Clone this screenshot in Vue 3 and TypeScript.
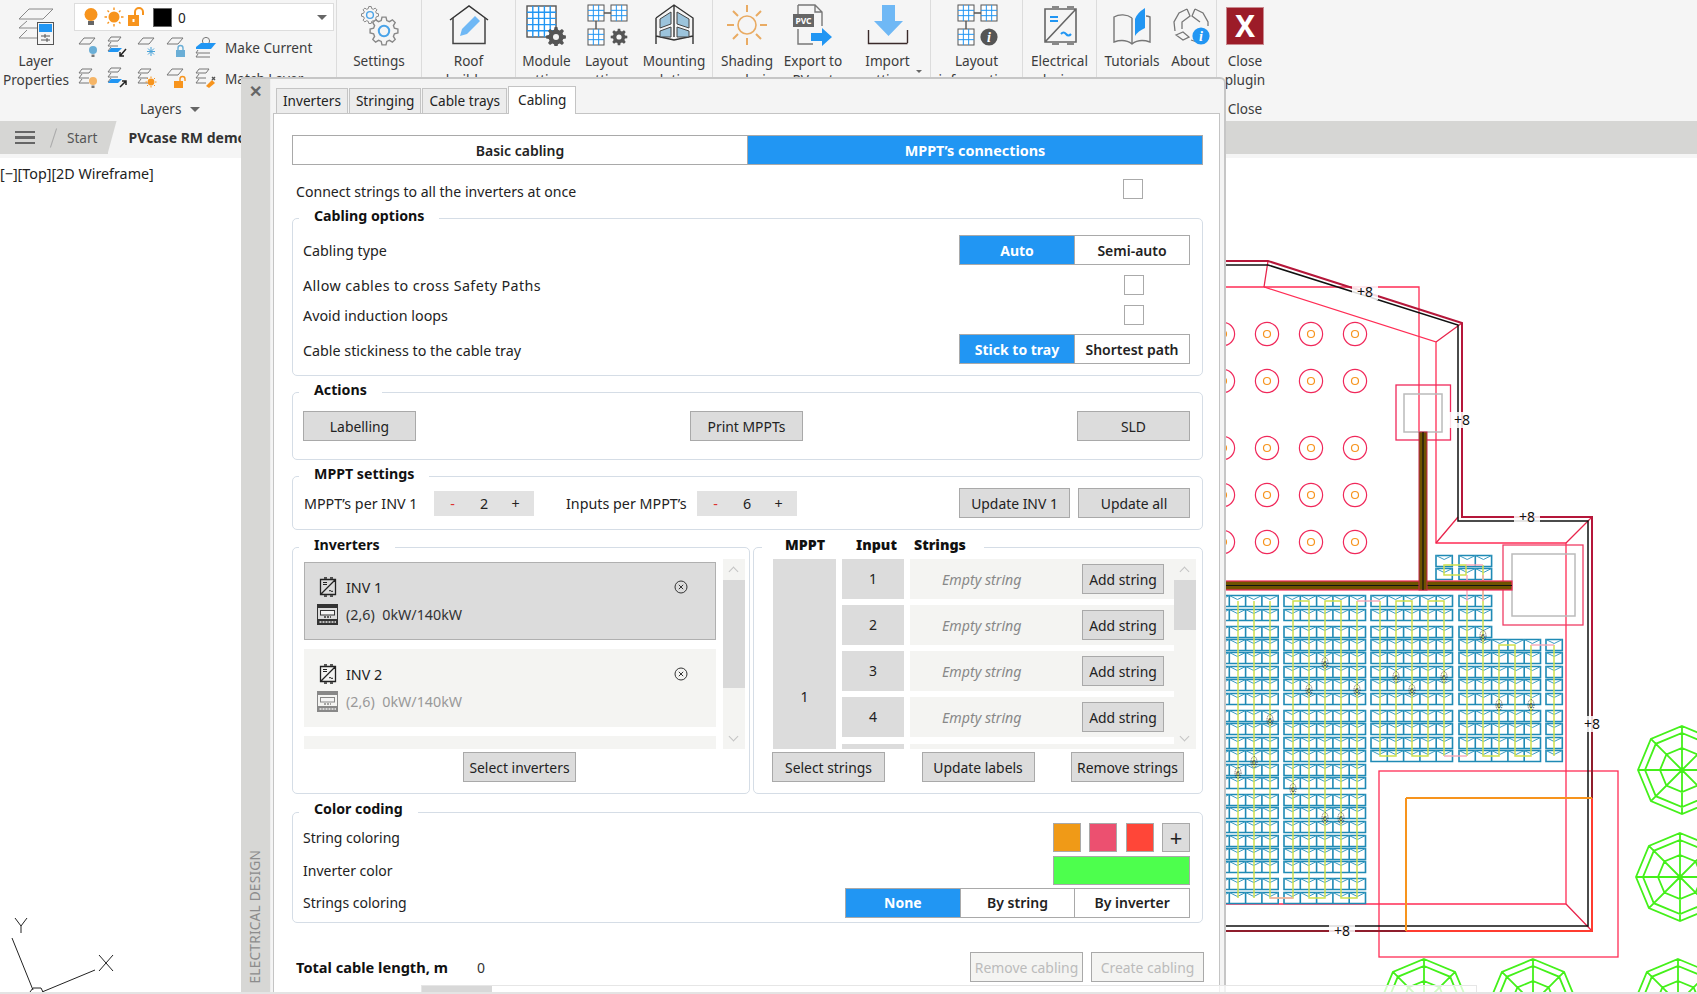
<script setup lang="ts">
// Static mock of the PVcase cabling dialog floating over the CAD window

const TAU = Math.PI * 2

function gear(cx: number, cy: number, ro: number, ri: number, n: number): string {
  let d = ''
  const step = TAU / n
  for (let i = 0; i < n; i++) {
    const a = i * step
    const pts: [number, number][] = [
      [ri, a - step * 0.34],
      [ro, a - step * 0.18],
      [ro, a + step * 0.18],
      [ri, a + step * 0.34]
    ]
    pts.forEach(([r, t], j) => {
      d += `${i === 0 && j === 0 ? 'M' : 'L'}${(cx + r * Math.sin(t)).toFixed(1)} ${(cy - r * Math.cos(t)).toFixed(1)}`
    })
  }
  return d + 'Z'
}

function grid(x: number, y: number, w: number, h: number, nx: number, ny: number): string {
  let d = ''
  for (let i = 1; i < nx; i++) d += `M${x + (w * i) / nx} ${y}V${y + h}`
  for (let i = 1; i < ny; i++) d += `M${x} ${y + (h * i) / ny}H${x + w}`
  return d
}

// ---- drawing data, in page pixels ----
const rowsY = [601, 615, 632, 645, 658, 672, 685, 699, 716, 729, 743, 756, 770, 783, 800, 813, 827, 841, 854, 867, 884, 898]
const CELL = 16.3

function moduleBlock(x0: number, cells: number, ys: number[]): string {
  let d = ''
  for (const cy of ys) {
    const top = cy - 5.5
    for (let c = 0; c < cells; c++) {
      const x = x0 + c * CELL
      d += `M${x} ${top}h${CELL}v11h${-CELL}z`
    }
  }
  return d
}

function moduleMarks(x0: number, cells: number, ys: number[]): string {
  let d = ''
  for (const cy of ys) {
    for (let c = 0; c < cells; c++) {
      d += `M${x0 + c * CELL} ${cy - 5.5}l${CELL / 2} 4l${CELL / 2} -4`
    }
  }
  return d
}

const blocks: [number, number, number[]][] = [
  [1213, 4, rowsY],
  [1284, 5, rowsY],
  [1371, 5, rowsY.slice(0, 12)],
  [1459, 2, rowsY.slice(0, 3)],
  [1459, 5, rowsY.slice(3, 12)],
  [1546, 1, rowsY.slice(3, 12)],
  [1436, 1, [561, 574]],
  [1459, 2, [561, 574]]
]
const modules = blocks.map(b => moduleBlock(b[0], b[1], b[2])).join('')
const moduleVs = blocks.map(b => moduleMarks(b[0], b[1], b[2])).join('')

const stringLines = [
  'M1238 601V898M1254 601V898M1270 601V898H1293V601H1309V898H1325V601H1341V898H1357V601',
  'M1380 601V756H1396V601H1412V756H1428V601H1444V756',
  'M1467 601V756M1483 601V756H1499V645H1515V756H1531V645',
  'M1554 645V756',
  'M1444 565H1466V575H1444ZM1483 565V601'
]
const pinkLinks = ['M1270 898H1293', 'M1357 601H1380', 'M1444 756H1467', 'M1531 645H1554', 'M1466 565H1483', 'M1467 575V601M1483 575V601']

const tinyLabels: [number, number][] = [
  [1270, 720], [1254, 762], [1238, 773], [1293, 789], [1309, 690], [1325, 663], [1357, 690], [1325, 818], [1341, 818],
  [1396, 677], [1412, 690], [1444, 677], [1483, 636], [1499, 705], [1531, 705]
]

const circleCols = [1223, 1267, 1311, 1355]
const circleRows = [334, 381, 448, 495, 542]

const plusLabels: [number, number][] = [[1365, 292], [1462, 420], [1527, 517], [1592, 724], [1342, 931]]

function tree(cx: number, cy: number): string {
  let d = ''
  for (const r of [44, 37, 22]) {
    for (let i = 0; i < 8; i++) {
      const t = (i * TAU) / 8
      d += `${i ? 'L' : 'M'}${(cx + r * Math.sin(t)).toFixed(1)} ${(cy - r * Math.cos(t)).toFixed(1)}`
    }
    d += 'Z'
  }
  for (let i = 0; i < 8; i++) {
    const t = (i * TAU) / 8
    d += `M${cx} ${cy}L${(cx + 44 * Math.sin(t)).toFixed(1)} ${(cy - 44 * Math.cos(t)).toFixed(1)}`
  }
  return d
}
const trees = [tree(1682, 770), tree(1680, 877), tree(1424, 1003), tree(1533, 1003), tree(1678, 1003)].join('')

// ---- dialog data ----
const tabs = ['Inverters', 'Stringing', 'Cable trays', 'Cabling']
const inverters = [
  { name: 'INV 1', selected: true },
  { name: 'INV 2', selected: false }
]
const inputs = [1, 2, 3, 4]
const swatches = ['#f09a17', '#ec5070', '#ff4638']
</script>

<template>
  <div class="app">
    <svg class="sprite" width="0" height="0">
      <symbol id="sheet" viewBox="0 0 20 22">
        <path d="M1 13 L6 7 H17 L12 13 Z" fill="none" stroke="#777" stroke-width="1" />
      </symbol>
      <symbol id="stack" viewBox="0 0 20 22">
        <path d="M1 6 L4 2 H14 L11 6 Z M4 7 L1 11 H11 M4 12 L1 16 H11" fill="none" stroke="#777" stroke-width="1" />
      </symbol>
      <symbol id="inv" viewBox="0 0 18 20">
        <path d="M1.5 2.5H16.5V17.5H1.5Z M1.5 17.5 L16.5 2.5 M5 0.8H8 M11 0.8H14 M5 19.2H8 M11 19.2H14" fill="none" stroke="#222" stroke-width="1.3" />
        <path d="M4 5.5H8 M4 7.5H8 M10 14 q1 -1.2 2 0 t2 0" fill="none" stroke="#222" stroke-width="1" />
      </symbol>
      <symbol id="device" viewBox="0 0 21 21">
        <rect x="0.5" y="0.5" width="20" height="20" fill="none" stroke="currentColor" />
        <path d="M1 2.5H20" fill="none" stroke="currentColor" stroke-width="3" />
        <path d="M1 15.5H20" fill="none" stroke="currentColor" />
        <path d="M1 18H20" fill="none" stroke="currentColor" stroke-width="4" />
        <path d="M2.5 18H19" fill="none" stroke="#eee" stroke-width="1.4" stroke-dasharray="2 1" />
        <rect x="3.5" y="6.5" width="14" height="4.5" fill="#f4f4f4" stroke="currentColor" />
        <path d="M7 13H14" stroke="currentColor" stroke-width="1.4" stroke-dasharray="2 1" />
      </symbol>
    </svg>

    <!-- ribbon -->
    <header class="ribbon">
      <section class="panel layers">
        <div class="layers-top">
          <div class="tool layer-props">
            <svg width="44" height="42" viewBox="0 0 44 42">
              <path d="M6 15 L16 5 H40 L30 15 Z" fill="none" stroke="#888" />
              <path d="M14 17 L6 24 H30 M14 26 L6 34 H27" fill="none" stroke="#888" />
              <rect x="24.5" y="18.5" width="16" height="22" fill="#f5f5f5" stroke="#555" />
              <rect x="26" y="20" width="13" height="8" fill="#2196f3" />
              <path d="M28 32H37 M28 36H37 M32 30v4 M34 34v4" stroke="#555" fill="none" />
            </svg>
            <span>Layer<br />Properties</span>
          </div>
          <div class="layers-side">
            <div class="combo">
              <svg width="18" height="22" viewBox="0 0 18 22">
                <circle cx="8" cy="8.5" r="6.5" fill="#f7941d" />
                <path d="M5 15H11V19H5Z" fill="#666" />
              </svg>
              <svg width="20" height="22" viewBox="0 0 20 22">
                <circle cx="10" cy="11" r="5.5" fill="#f7941d" />
                <path d="M10 1.5V4 M10 18V20.5 M.5 11H3 M17 11H19.5 M3.5 4.5L5 6 M15 16L16.5 17.5 M3.5 17.5L5 16 M15 6L16.5 4.5" stroke="#f7941d" stroke-width="1.4" />
              </svg>
              <svg width="20" height="22" viewBox="0 0 20 22">
                <rect x="1" y="9" width="11" height="11" fill="#f7941d" />
                <rect x="5.5" y="13" width="2" height="3" fill="#fff" />
                <path d="M8 9V6a4 4 0 0 1 8 0V9" fill="none" stroke="#f7941d" stroke-width="2" />
              </svg>
              <i class="black"></i>
              <span class="zero">0</span>
              <i class="caret"></i>
            </div>
            <div class="icon-row">
              <svg width="20" height="22" viewBox="0 0 20 22">
                <use href="#sheet" width="20" height="22" y="-5" />
                <circle cx="15" cy="14" r="4" fill="#6aaed6" /><path d="M13.5 18.5h3V21h-3z" fill="#777" />
              </svg>
              <svg width="21" height="22" viewBox="0 0 21 22">
                <use href="#stack" width="20" height="22" y="-1" />
                <path d="M1 16 L4 12 H15 L11 16 Z" fill="#2196f3" />
                <path d="M19 13 L13 20 M13 16v4h4" stroke="#222" fill="none" stroke-width="1.5" />
              </svg>
              <svg width="20" height="22" viewBox="0 0 20 22">
                <use href="#sheet" width="20" height="22" y="-5" />
                <path d="M14 11V20 M10 15.5H18 M11 12.5L17 18.5 M11 18.5L17 12.5" stroke="#4aa3d8" />
              </svg>
              <svg width="20" height="22" viewBox="0 0 20 22">
                <use href="#sheet" width="20" height="22" y="-5" />
                <rect x="10" y="14" width="9" height="7" fill="#6aaed6" />
                <path d="M12 14V12a2.5 2.5 0 0 1 5 0V14" fill="none" stroke="#6aaed6" stroke-width="1.4" />
              </svg>
              <svg width="22" height="22" viewBox="0 0 22 22">
                <circle cx="11" cy="5" r="3.6" fill="#f5f5f5" stroke="#777" />
                <path d="M1 11 L6 7 H21 L16 13 H1 Z" fill="#2196f3" />
                <path d="M3 14 L1 17 H15 M3 18 L1 21 H15" fill="none" stroke="#777" />
              </svg>
              <span class="row-label">Make Current</span>
            </div>
            <div class="icon-row">
              <svg width="20" height="22" viewBox="0 0 20 22">
                <use href="#stack" width="20" height="22" />
                <circle cx="15" cy="14" r="4" fill="#f5b567" /><path d="M13.5 18.5h3V21h-3z" fill="#777" />
              </svg>
              <svg width="21" height="22" viewBox="0 0 21 22">
                <use href="#stack" width="20" height="22" y="-1" />
                <path d="M1 16 L4 12 H15 L11 16 Z" fill="#2196f3" />
                <path d="M13 20 L19 14 M15 14h4v4" stroke="#222" fill="none" stroke-width="1.5" />
              </svg>
              <svg width="20" height="22" viewBox="0 0 20 22">
                <use href="#stack" width="20" height="22" />
                <circle cx="14" cy="15" r="3.4" fill="#f7941d" />
                <path d="M14 9.5V11 M14 19V20.5 M8.5 15H10 M18 15H19.5 M10 11L11 12 M17 18L18 19 M10 19L11 18 M17 12L18 11" stroke="#f7941d" />
              </svg>
              <svg width="20" height="22" viewBox="0 0 20 22">
                <use href="#sheet" width="20" height="22" y="-5" />
                <rect x="8" y="14" width="9" height="7" fill="#f7941d" />
                <path d="M14 14V12a2.5 2.5 0 0 1 5 0V14" fill="none" stroke="#f7941d" stroke-width="1.4" />
              </svg>
              <svg width="22" height="22" viewBox="0 0 22 22">
                <use href="#stack" width="20" height="22" />
                <path d="M11 19 L17 13 L20 16 L14 21 Z" fill="#f7941d" />
                <path d="M17 10 L20 13 M20 10 L17 13" stroke="#555" stroke-width="1.4" />
              </svg>
              <span class="row-label">Match Layer</span>
            </div>
          </div>
        </div>
        <div class="panel-foot">Layers <i class="caret small"></i></div>
      </section>

      <section class="panel p-settings">
        <div class="tool">
          <svg width="40" height="40" viewBox="0 0 40 40">
            <path :d="gear(11, 10, 8.6, 6.6, 8)" fill="#f5f5f5" stroke="#888" />
            <circle cx="11" cy="10" r="3.4" fill="#f5f5f5" stroke="#4aa3e8" stroke-width="1.4" />
            <path :d="gear(25, 26, 14, 10.8, 8)" fill="#f5f5f5" stroke="#888" stroke-width="1.4" />
            <circle cx="25" cy="26" r="5.2" fill="#f5f5f5" stroke="#4aa3e8" stroke-width="2" />
          </svg>
          <span>Settings</span>
        </div>
      </section>

      <section class="panel p-roof">
        <div class="tool">
          <svg width="40" height="40" viewBox="0 0 40 40">
            <path d="M1 15 L20 1 L39 15" fill="none" stroke="#333" stroke-width="1.5" />
            <path d="M4 13V38.5H36V13" fill="none" stroke="#444" stroke-width="1.5" />
            <path d="M11 31 L13 24 L26 11 L31 16 L18 29 Z" fill="#6fb8f5" />
          </svg>
          <span>Roof<br />builder</span>
        </div>
      </section>

      <section class="panel p-module">
        <div class="tool t-module">
          <svg width="42" height="42" viewBox="0 0 42 42">
            <rect x="1" y="2" width="29" height="31" fill="#fff" stroke="#555" stroke-width="1.4" />
            <path :d="grid(1, 2, 29, 31, 5, 5)" stroke="#2196f3" stroke-width="1.4" fill="none" />
            <path :d="gear(30, 33, 10, 7.5, 8)" fill="#555" />
            <circle cx="30" cy="33" r="3" fill="#f5f5f5" />
          </svg>
          <span>Module<br />settings</span>
        </div>
        <div class="tool t-layout">
          <svg width="42" height="42" viewBox="0 0 42 42">
            <g v-for="p in [[2, 1], [25, 1], [2, 25]]" :key="p[0] * 100 + p[1]">
              <rect :x="p[0]" :y="p[1]" width="16" height="16" fill="#fff" stroke="#555" />
              <path :d="grid(p[0], p[1], 16, 16, 3, 3)" stroke="#2196f3" fill="none" />
            </g>
            <path d="M18 9H25 M10 17V25" stroke="#555" stroke-width="1.4" />
            <path :d="gear(33, 33, 8.4, 6.2, 8)" fill="#555" />
            <circle cx="33" cy="33" r="2.6" fill="#f5f5f5" />
          </svg>
          <span>Layout<br />settings</span>
        </div>
        <div class="tool t-mount">
          <svg width="42" height="42" viewBox="0 0 42 42">
            <path d="M3 14 L21 1 L40 14 V40 M3 14 V40 M21 1 V33 M3 32 L21 36 L40 32" fill="none" stroke="#333" stroke-width="1.4" />
            <path d="M7 15 L18 8 V20 L7 24 Z M7 27 L18 23 V33 L7 33 Z M24 8 L36 15 V24 L24 20 Z M24 23 L36 27 V33 L24 33 Z" fill="#9cc4dc" stroke="#444" />
          </svg>
          <span>Mounting<br />solutions</span>
        </div>
      </section>

      <section class="panel p-shading">
        <div class="tool t-shade">
          <svg width="42" height="42" viewBox="0 0 42 42">
            <circle cx="21" cy="21" r="9" fill="none" stroke="#e9ab63" stroke-width="1.6" />
            <path d="M21 1V8 M21 34V41 M1 21H8 M34 21H41 M7 7L12 12 M30 30L35 35 M7 35L12 30 M30 12L35 7" stroke="#e9ab63" stroke-width="2" />
          </svg>
          <span>Shading<br />analysis</span>
        </div>
        <div class="tool t-export">
          <svg width="42" height="42" viewBox="0 0 42 42">
            <path d="M6 1H23L30 8V22 M6 1V12 M6 25V40H21 M23 1V8H30" fill="none" stroke="#777" stroke-width="1.4" />
            <rect x="1" y="10" width="21" height="13" fill="#666" />
            <text x="11.5" y="20" class="pvc">PVC</text>
            <path d="M19 29H30V24 L40 33 L30 42V37H19Z" fill="#2196f3" />
          </svg>
          <span>Export to<br />PVsyst</span>
        </div>
        <div class="tool t-import">
          <svg width="42" height="42" viewBox="0 0 42 42">
            <path d="M15 1H28V17H36L21.5 32L7 17H15Z" fill="#6fb8f5" />
            <path d="M40.5 26V39 M1.5 26V39.5H40.5" fill="none" stroke="#3a2a2a" stroke-width="1.4" />
          </svg>
          <span>Import<br />settings</span>
          <i class="caret tiny"></i>
        </div>
      </section>

      <section class="panel p-info">
        <div class="tool">
          <svg width="42" height="42" viewBox="0 0 42 42">
            <g v-for="p in [[2, 1], [25, 1], [2, 25]]" :key="p[0] * 100 + p[1]">
              <rect :x="p[0]" :y="p[1]" width="16" height="16" fill="#fff" stroke="#555" />
              <path :d="grid(p[0], p[1], 16, 16, 3, 3)" stroke="#2196f3" fill="none" />
            </g>
            <path d="M18 9H25 M10 17V25" stroke="#555" stroke-width="1.4" />
            <circle cx="33" cy="33" r="8.6" fill="#555" />
            <text x="33" y="38" class="info">i</text>
          </svg>
          <span>Layout<br />information</span>
        </div>
      </section>

      <section class="panel p-elec">
        <div class="tool">
          <svg width="40" height="40" viewBox="0 0 40 40">
            <path d="M5 4H36V37H5Z M5 37 L36 4 M12 2H19 M27 2H34 M12 39H19 M27 39H34" fill="none" stroke="#666" stroke-width="1.6" />
            <path d="M10 12H18 M10 16H18" stroke="#2196f3" stroke-width="2" />
            <path d="M21 29 q2.5 -3 5 0 t5 0" fill="none" stroke="#2196f3" stroke-width="2" />
          </svg>
          <span>Electrical<br />design</span>
        </div>
      </section>

      <section class="panel p-help">
        <div class="tool t-tut">
          <svg width="42" height="42" viewBox="0 0 42 42">
            <path d="M21 14 C16 10 8 10 3 13 V38 C9 36 16 36 21 40 C26 36 33 36 39 38 V13 C37 12 36 12 35 12 M21 14 V40" fill="none" stroke="#777" stroke-width="1.4" />
            <path d="M24 32 V15 Q26 9 34 4 V24 Q27 27 24 32Z" fill="#2196f3" />
          </svg>
          <span>Tutorials</span>
        </div>
        <div class="tool t-about">
          <svg width="42" height="42" viewBox="0 0 42 42">
            <path d="M17 5 L9 9 L4 18 L5 27 M25 5 L33 9 L38 18 V22 M17 5 L20 12 L12 18 L12 25 M25 5 L22 12 L30 18 M6 31 L13 28 L19 33 L13 36 Z M21 36 L27 38" fill="none" stroke="#777" stroke-width="1.3" />
            <circle cx="31" cy="32" r="8.6" fill="#2196f3" />
            <text x="31" y="37" class="info">i</text>
          </svg>
          <span>About</span>
        </div>
      </section>

      <section class="panel p-close">
        <div class="tool">
          <div class="close-icon">X</div>
          <span>Close<br />plugin</span>
        </div>
        <div class="panel-foot">Close</div>
      </section>
    </header>

    <!-- file tabs -->
    <nav class="filebar">
      <span class="burger"><i></i><i></i><i></i></span>
      <span class="slash"></span>
      <span class="start">Start</span>
      <span class="active-file">PVcase RM demo</span>
    </nav>

    <!-- drawing area -->
    <main class="canvas">
      <div class="view-label">[−][Top][2D Wireframe]</div>
      <svg class="drawing" viewBox="0 158 1697 836" width="1697" height="836">
        <!-- ucs icon -->
        <g fill="none" stroke="#222" stroke-width="1">
          <path d="M12 938 L33 990 M95 970 L42 992 M30 992 L33 988 L41 988 L43 992" />
          <path d="M15 918 L21 926 L27 918 M21 926 V933" />
          <path d="M99 955 L113 971 M113 955 L99 971" />
        </g>

        <!-- roof setback -->
        <path d="M1200 287H1264L1436 342V543H1566V904H1200" fill="none" stroke="#ff2d55" stroke-width="1.3" />
        <path d="M1268 261L1264 287M1462 323L1436 342M1458 517L1436 543M1592 517L1566 543M1592 931L1566 904" fill="none" stroke="#e8254c" stroke-width="1.3" />
        <path d="M1264 287H1419V432" fill="none" stroke="#ff2d55" stroke-width="1.3" />
        <rect x="1396" y="385" width="54.5" height="55" fill="none" stroke="#f0285a" stroke-width="1.3" />
        <rect x="1404" y="394" width="38" height="38" fill="none" stroke="#bbb" stroke-width="1.5" />
        <rect x="1503" y="545" width="80" height="80" fill="none" stroke="#f03d65" stroke-width="1.3" />
        <rect x="1512" y="554" width="63" height="62" fill="none" stroke="#bbb" stroke-width="1.5" />
        <rect x="1379" y="771" width="239" height="186" fill="none" stroke="#ff2d55" stroke-width="1.3" />

        <!-- roof outline -->
        <path d="M1200 265H1268L1458 325V521H1588V926H1200" fill="none" stroke="#111" stroke-width="1.5" />
        <path d="M1200 261H1268L1462 323V517H1592V798" fill="none" stroke="#b5173a" stroke-width="2" />
        <path d="M1592 660V798M1200 931H1406" fill="none" stroke="#8f1d2c" stroke-width="2" />
        <path d="M1406 931H1592V798" fill="none" stroke="#ff3c30" stroke-width="2" />
        <path d="M1406 798H1592M1406 798V931" fill="none" stroke="#f7941d" stroke-width="2" />

        <!-- modules -->
        <path :d="modules" fill="none" stroke="#1f8ab5" stroke-width="1.6" />
        <path :d="moduleVs" fill="none" stroke="#3a9bc2" stroke-width="1" />
        <path v-for="(d, i) in stringLines" :key="'s' + i" :d="d" fill="none" stroke="#cfe04e" stroke-width="1.5" />
        <path v-for="(d, i) in pinkLinks" :key="'p' + i" :d="d" fill="none" stroke="#f7a8b8" stroke-width="1.4" />

        <!-- cable trays -->
        <rect x="1200" y="581" width="312" height="9" fill="#6e5300" stroke="#f0285a" stroke-width="1.2" />
        <path d="M1200 585.5H1512" stroke="#111" stroke-width="1.2" />
        <rect x="1419" y="432" width="8" height="158" fill="#6e5300" stroke="#c22648" stroke-width="1" />
        <path d="M1423 432V590" stroke="#111" stroke-width="1.2" />

        <!-- pillars -->
        <g v-for="y in circleRows" :key="'r' + y">
          <g v-for="x in circleCols" :key="'c' + x">
            <circle :cx="x" :cy="y" r="11.6" fill="none" stroke="#f0285a" stroke-width="1.2" />
            <circle :cx="x" :cy="y" r="3.5" fill="none" stroke="#f7941d" stroke-width="1.2" />
          </g>
        </g>

        <!-- tiny string labels -->
        <g v-for="l in tinyLabels" :key="l[0] + '-' + l[1]">
          <ellipse :cx="l[0]" :cy="l[1]" rx="3" ry="5.5" fill="none" stroke="#222" stroke-width=".8" stroke-dasharray="1 1" />
          <text :x="l[0]" :y="l[1] + 2.5" class="tiny">6</text>
        </g>

        <!-- height labels -->
        <g v-for="l in plusLabels" :key="'h' + l[0]">
          <rect :x="l[0] - 13" :y="l[1] - 8" width="26" height="16" fill="#fff" opacity=".85" />
          <text :x="l[0]" :y="l[1] + 5" class="plus">+8</text>
        </g>

        <!-- trees -->
        <path :d="trees" fill="none" stroke="#44f01a" stroke-width="1.8" />
      </svg>
    </main>

    <!-- floating dialog -->
    <aside class="dialog">
      <div class="side">
        <span class="side-x">✕</span>
        <span class="side-title">ELECTRICAL DESIGN</span>
      </div>
      <div class="body">
        <div class="tabs">
          <span v-for="t in tabs" :key="t" class="tab" :class="{ on: t === 'Cabling' }">{{ t }}</span>
        </div>
        <div class="content">
          <div class="seg big">
            <span class="seg-btn">Basic cabling</span>
            <span class="seg-btn on">MPPT’s connections</span>
          </div>

          <div class="connect">
            <span>Connect strings to all the inverters at once</span>
            <i class="check"></i>
          </div>

          <section class="group g-options">
            <h4 class="legend">Cabling options</h4>
            <div class="row">
              <span>Cabling type</span>
              <div class="seg w231">
                <span class="seg-btn on">Auto</span>
                <span class="seg-btn">Semi-auto</span>
              </div>
            </div>
            <div class="row chk-row first">
              <span>Allow cables to cross Safety Paths</span>
              <i class="check"></i>
            </div>
            <div class="row chk-row">
              <span>Avoid induction loops</span>
              <i class="check"></i>
            </div>
            <div class="row last">
              <span>Cable stickiness to the cable tray</span>
              <div class="seg w231">
                <span class="seg-btn on">Stick to tray</span>
                <span class="seg-btn">Shortest path</span>
              </div>
            </div>
          </section>

          <section class="group g-actions">
            <h4 class="legend">Actions</h4>
            <button class="btn w113">Labelling</button>
            <button class="btn w113">Print MPPTs</button>
            <button class="btn w113">SLD</button>
          </section>

          <section class="group g-mppt">
            <h4 class="legend">MPPT settings</h4>
            <span class="mppt-a">MPPT’s per INV 1</span>
            <div class="stepper"><b class="minus">-</b><span>2</span><b>+</b></div>
            <span class="mppt-b">Inputs per MPPT’s</span>
            <div class="stepper"><b class="minus">-</b><span>6</span><b>+</b></div>
            <span class="grow"></span>
            <button class="btn u1">Update INV 1</button>
            <button class="btn u2">Update all</button>
          </section>

          <div class="two-col">
            <section class="group g-inv">
              <h4 class="legend">Inverters</h4>
              <div class="list-wrap">
                <div class="inv-list">
                  <div v-for="inv in inverters" :key="inv.name" class="inv-card" :class="{ sel: inv.selected }">
                    <div class="inv-line">
                      <svg class="inv-ic" width="18" height="20"><use href="#inv" width="18" height="20" /></svg>
                      <span class="inv-name">{{ inv.name }}</span>
                      <svg class="inv-x" width="14" height="14" viewBox="0 0 14 14">
                        <circle cx="7" cy="7" r="6" fill="none" stroke="#333" />
                        <path d="M4.8 4.8L9.2 9.2M9.2 4.8L4.8 9.2" stroke="#333" />
                      </svg>
                    </div>
                    <div class="inv-line second">
                      <svg class="dev-ic" width="21" height="21"><use href="#device" width="21" height="21" /></svg>
                      <span>(2,6)&nbsp; 0kW/140kW</span>
                    </div>
                  </div>
                  <div class="inv-card"></div>
                </div>
                <div class="scroll s-inv"><i class="up"></i><i class="thumb"></i><i class="down"></i></div>
              </div>
              <button class="btn w113 center">Select inverters</button>
            </section>

            <section class="group g-str">
              <div class="legend legend-str"><b>MPPT</b><b>Input</b><b>Strings</b></div>
              <div class="list-wrap">
                <div class="str-grid">
                  <div class="mppt-col"><span>1</span></div>
                  <div class="str-rows">
                    <div v-for="n in inputs" :key="n" class="str-row">
                      <div class="input-no">{{ n }}</div>
                      <div class="str-cell">
                        <em>Empty string</em>
                        <button class="btn add">Add string</button>
                      </div>
                    </div>
                    <div class="str-row next">
                      <div class="input-no"></div>
                      <div class="str-cell"></div>
                    </div>
                  </div>
                </div>
                <div class="scroll s-str"><i class="up"></i><i class="thumb"></i><i class="down"></i></div>
              </div>
              <div class="str-foot">
                <button class="btn w113">Select strings</button>
                <button class="btn w113">Update labels</button>
                <button class="btn w113">Remove strings</button>
              </div>
            </section>
          </div>

          <section class="group g-color">
            <h4 class="legend">Color coding</h4>
            <div class="c-row r1">
              <span>String coloring</span>
              <div class="swatches">
                <i v-for="c in swatches" :key="c" class="swatch" :style="{ background: c }"></i>
                <button class="swatch plus-btn">+</button>
              </div>
            </div>
            <div class="c-row r2">
              <span>Inverter color</span>
              <i class="green"></i>
            </div>
            <div class="c-row r3">
              <span>Strings coloring</span>
              <div class="seg w345">
                <span class="seg-btn on">None</span>
                <span class="seg-btn">By string</span>
                <span class="seg-btn">By inverter</span>
              </div>
            </div>
          </section>

          <div class="total">
            <b>Total cable length, m</b>
            <span class="total-val">0</span>
            <span class="grow"></span>
            <button class="btn off">Remove cabling</button>
            <button class="btn off">Create cabling</button>
          </div>
        </div>
      </div>
    </aside>

    <!-- command line, over everything -->
    <div class="cmdline"><span class="cmd-grip"></span></div>
    <div class="page-foot"></div>
  </div>
</template>

<style scoped>
.app {
  position: relative;
  width: 1697px;
  height: 994px;
  overflow: hidden;
  display: flex;
  flex-direction: column;
  background: #fff;
  color: #222;
  font-family: 'Noto Sans', 'Open Sans', sans-serif;
  font-size: 14px;
}
.sprite {
  position: absolute;
}

/* ribbon */
.ribbon {
  display: flex;
  height: 121px;
  flex: none;
  background: #f5f5f5;
  color: #3c3c3c;
  font-size: 13.6px;
}
.panel {
  position: relative;
  display: flex;
  border-right: 1px solid #dcdcdc;
  box-sizing: border-box;
}
.tool {
  position: relative;
  display: flex;
  flex-direction: column;
  align-items: center;
  padding-top: 4px;
  flex: 1 0 auto;
  box-sizing: border-box;
  text-align: center;
  line-height: 19px;
}
.tool svg,
.close-icon {
  height: 42px;
  flex: none;
}
.tool span {
  margin-top: 5px;
  white-space: nowrap;
}
.layers {
  width: 337px;
  flex-direction: column;
}
.layers-top {
  display: flex;
}
.layer-props {
  flex: none;
  width: 72px;
  margin-right: 2px;
}
.layer-props svg {
  margin-left: -2px;
}
.layers-side {
  padding-top: 3px;
}
.combo {
  display: flex;
  align-items: center;
  width: 260px;
  height: 28px;
  padding-left: 8px;
  box-sizing: border-box;
  background: #fff;
  border: 1px solid #ddd;
}
.combo svg {
  margin-right: 3px;
}
.black {
  width: 17px;
  height: 17px;
  background: #000;
  border: 1px solid #666;
  margin-left: 3px;
}
.zero {
  margin-left: 6px;
  color: #222;
}
.caret {
  width: 0;
  height: 0;
  margin-left: auto;
  margin-right: 6px;
  border-left: 5px solid transparent;
  border-right: 5px solid transparent;
  border-top: 5px solid #666;
}
.icon-row {
  display: flex;
  align-items: center;
  gap: 9px;
  height: 22px;
  margin-top: 5px;
  padding-left: 4px;
}
.icon-row + .icon-row {
  margin-top: 9px;
}
.row-label {
  margin-left: -1px;
  white-space: nowrap;
}
.panel-foot {
  position: absolute;
  left: 0;
  right: 0;
  top: 99px;
  text-align: center;
  line-height: 20px;
  padding-left: 4px;
}
.caret.small {
  display: inline-block;
  margin: 0 0 2px 5px;
}
.p-settings { width: 85px; }
.p-roof { width: 94px; }
.p-module { width: 197px; }
.t-module { flex: 0 0 61px; }
.t-layout { flex: 0 0 59px; }
.p-shading { width: 218px; }
.t-shade { flex: 0 0 68px; }
.t-export { flex: 0 0 64px; }
.caret.tiny {
  position: absolute;
  right: 8px;
  top: 70px;
  margin: 0;
  border-width: 3px 3px 0;
}
.p-info { width: 92px; }
.p-elec { width: 74px; }
.p-help { width: 120px; }
.t-tut { flex: 0 0 70px; }
.t-about { margin-left: -2px; }
.p-close { width: 56px; border-right: 0; }
.close-icon {
  width: 38px;
  height: 38px;
  margin-top: 3px;
  box-sizing: border-box;
  background: #9c1c28;
  border: 1px solid #c98a90;
  color: #fff;
  font-size: 30px;
  font-weight: 700;
  line-height: 36px;
  text-align: center;
}
.close-icon + span {
  margin-top: 6px;
}
.p-close .panel-foot {
  padding: 0;
}
.pvc {
  fill: #fff;
  font-size: 8.5px;
  font-weight: 700;
  text-anchor: middle;
}
.info {
  fill: #fff;
  font-family: 'Liberation Serif', serif;
  font-size: 14px;
  font-style: italic;
  font-weight: 700;
  text-anchor: middle;
}

/* file bar */
.filebar {
  display: flex;
  align-items: center;
  flex: none;
  height: 33px;
  background: #d6d6d4;
  position: relative;
}
.burger {
  display: flex;
  flex-direction: column;
  gap: 3px;
  width: 20px;
  margin-left: 15px;
}
.burger i {
  height: 2.5px;
  background: #666;
}
.slash {
  width: 1px;
  height: 20px;
  margin-left: 18px;
  background: #aaa;
  transform: rotate(18deg);
}
.start {
  margin-left: 13px;
  color: #555;
  font-size: 13.6px;
}
.active-file {
  margin-left: 10px;
  padding: 0 40px 0 21px;
  height: 33px;
  line-height: 33px;
  background: #f5f5f5;
  font-weight: 700;
  color: #333;
  clip-path: polygon(9px 0, 100% 0, 100% 100%, 0 100%);
  white-space: nowrap;
}

/* canvas */
.canvas {
  position: relative;
  flex: 1;
  border-top: 4px solid #f5f5f5;
  overflow: hidden;
}
.view-label {
  padding-top: 6px;
  font-size: 14.3px;
  line-height: 20px;
  white-space: nowrap;
  color: #222;
}
.drawing {
  position: absolute;
  left: 0;
  top: 0;
}
.tiny {
  font-size: 7px;
  text-anchor: middle;
  fill: #333;
}
.plus {
  font-size: 14px;
  text-anchor: middle;
  fill: #111;
}

/* dialog */
.dialog {
  position: absolute;
  left: 241px;
  top: 77px;
  width: 985px;
  height: 930px;
  display: flex;
  box-sizing: border-box;
  background: #f4f4f4;
  border: 2px solid #c6c6c6;
  border-left: 0;
  border-radius: 0 6px 0 0;
}
.side {
  position: relative;
  flex: none;
  width: 29px;
  margin-right: 1px;
  background: #d7d7d5;
  border-right: 1px solid #eee;
}
.side-x {
  position: absolute;
  top: 2px;
  left: 8px;
  color: #666;
  font-size: 16px;
  font-weight: 700;
  line-height: 20px;
}
.side-title {
  position: absolute;
  left: 4px;
  top: 771px;
  writing-mode: vertical-rl;
  transform: rotate(180deg);
  color: #8c8c8c;
  font-size: 13.7px;
  line-height: 20px;
  letter-spacing: 0.2px;
  white-space: nowrap;
}
.body {
  flex: 1;
  padding: 6px 4px 0 1px;
  min-width: 0;
}
.tabs {
  display: flex;
  height: 28px;
  padding-left: 3px;
  align-items: flex-end;
}
.tab {
  height: 25px;
  padding: 0 6px;
  box-sizing: border-box;
  line-height: 23px;
  background: #ececec;
  border: 1px solid #c4c4c4;
  border-bottom: 0;
  color: #222;
  margin-right: 1px;
  font-size: 13.6px;
}
.tab.on {
  height: 28px;
  line-height: 25px;
  padding: 0 9px;
  background: #fff;
  position: relative;
  z-index: 1;
  margin-bottom: -1px;
  border-width: 1px 1px 0;
}
.content {
  height: 900px;
  padding: 21px 16px 0 18px;
  box-sizing: border-box;
  background: #fff;
  border: 1px solid #c4c4c4;
  border-bottom: 0;
}

/* segmented */
.seg {
  display: flex;
  box-sizing: border-box;
  height: 30px;
  border: 1px solid #a9a9a9;
  background: #a9a9a9;
  gap: 1px;
  font-weight: 600;
  flex: none;
}
.seg-btn {
  flex: 1 1 0;
  display: flex;
  align-items: center;
  justify-content: center;
  background: #fff;
  color: #222;
  font-size: 14px;
}
.seg-btn.on {
  background: #2196f3;
  color: #fff;
  font-weight: 700;
}
.seg.big {
  width: 911px;
}
.seg.big .seg-btn.on {
  font-size: 14.4px;
}
.w231 {
  width: 231px;
}
.w345 {
  width: 345px;
}
.connect {
  display: flex;
  align-items: center;
  justify-content: space-between;
  height: 30px;
  margin-top: 11px;
  padding: 0 60px 0 4px;
  font-size: 14.1px;
}
.check {
  display: block;
  width: 20px;
  height: 20px;
  box-sizing: border-box;
  background: #fff;
  border: 1px solid #aaa;
}
.connect .check {
  margin-top: -4px;
}

/* groups */
.group {
  position: relative;
  box-sizing: border-box;
  border: 1px solid #d5dde6;
  border-radius: 5px;
}
.legend {
  position: absolute;
  top: -13px;
  left: 6px;
  margin: 0;
  padding: 0 15px;
  background: #fff;
  font-size: 14.2px;
  line-height: 20px;
  font-weight: 700;
  color: #111;
}
.g-options {
  height: 158px;
  margin-top: 12px;
  padding: 16px 12px 0 10px;
}
.row {
  display: flex;
  align-items: center;
  justify-content: space-between;
  height: 30px;
  font-size: 14.3px;
}
.chk-row {
  padding-right: 46px;
}
.chk-row.first {
  margin-top: 5px;
  letter-spacing: 0.4px;
}
.row.last {
  margin-top: 4px;
}
.row.last > span {
  padding-top: 2px;
}
.g-actions {
  display: flex;
  align-items: center;
  justify-content: space-between;
  height: 68px;
  margin-top: 16px;
  padding: 0 12px 0 10px;
}
.btn {
  height: 30px;
  padding: 0;
  box-sizing: border-box;
  background: #dcdcdc;
  border: 1px solid #a9a9a9;
  color: #222;
  font-family: inherit;
  font-size: 13.9px;
}
.w113 {
  width: 113px;
}
.g-mppt {
  display: flex;
  align-items: center;
  height: 54px;
  margin-top: 16px;
  padding: 0 12px 0 11px;
  font-size: 14.3px;
}
.grow {
  flex: 1;
}
.mppt-a {
  width: 130px;
}
.mppt-b {
  width: 131px;
  margin-left: 32px;
}
.stepper {
  display: flex;
  width: 100px;
  height: 25px;
  line-height: 25px;
  background: #e2e2e2;
  text-align: center;
}
.stepper b {
  width: 37px;
  font-weight: 400;
}
.stepper span {
  flex: 1;
}
.minus {
  color: #d33;
}
.u1 {
  width: 111px;
}
.u2 {
  width: 112px;
  margin-left: 8px;
}

/* inverters + strings */
.two-col {
  display: flex;
  gap: 3px;
  margin-top: 17px;
}
.g-inv {
  width: 458px;
  height: 247px;
  padding: 11px 4px 0 11px;
  font-size: 14.3px;
}
.g-str {
  width: 450px;
  height: 247px;
  padding: 11px 6px 0 19px;
}
.list-wrap {
  display: flex;
  height: 190px;
  overflow: hidden;
}
.inv-list {
  width: 412px;
  padding-top: 3px;
}
.inv-card {
  height: 78px;
  margin-bottom: 9px;
  box-sizing: border-box;
  padding: 14px 0 0 14px;
  background: #f4f4f2;
  border: 1px solid #f4f4f2;
}
.inv-card.sel {
  background: #dcdcdc;
  border-color: #b0b0b0;
}
.inv-line {
  display: flex;
  align-items: center;
  height: 20px;
}
.inv-line.second {
  height: 21px;
  margin-top: 7px;
  margin-left: -2px;
  color: #999;
}
.inv-card.sel .second {
  color: #333;
}
.inv-name {
  margin-left: 9px;
  color: #222;
}
.inv-x {
  margin-left: auto;
  margin-right: 27px;
}
.dev-ic {
  color: #888;
  margin-right: 8px;
}
.sel .dev-ic {
  color: #333;
}
.scroll {
  position: relative;
  flex: none;
  width: 22px;
  height: 190px;
  background: #f4f4f2;
}
.s-inv {
  margin-left: 7px;
}
.thumb {
  position: absolute;
  left: 0;
  right: 0;
  top: 21px;
  background: #d9d9d9;
}
.s-inv .thumb {
  height: 108px;
}
.s-str .thumb {
  height: 50px;
}
.up,
.down {
  position: absolute;
  left: 7px;
  width: 7px;
  height: 7px;
  box-sizing: border-box;
  border: 1px solid #c4c4c4;
  border-width: 1px 0 0 1px;
}
.up {
  top: 9px;
  transform: rotate(45deg);
}
.down {
  bottom: 9px;
  transform: rotate(225deg);
}
.center {
  display: block;
  margin: 3px auto 0;
  transform: translateX(-5px);
}
.legend-str {
  display: grid;
  grid-template-columns: 71px 58px auto;
  left: 8px;
  padding: 0 18px 0 23px;
}
.str-grid {
  display: flex;
  gap: 6px;
  width: 402px;
}
.mppt-col {
  flex: none;
  width: 63px;
  height: 274px;
  display: flex;
  align-items: center;
  justify-content: center;
  background: #dcdcdc;
}
.str-rows {
  display: flex;
  flex-direction: column;
  gap: 6px;
  flex: 1;
}
.str-row {
  display: flex;
  gap: 6px;
  flex: none;
  height: 40px;
}
.str-row.next {
  margin-top: 1px;
}
.input-no {
  flex: none;
  width: 62px;
  background: #dcdcdc;
  line-height: 40px;
  text-align: center;
}
.str-cell {
  flex: 1;
  display: flex;
  align-items: center;
  justify-content: space-between;
  padding: 0 10px 0 32px;
  background: #f4f4f2;
}
.str-cell em {
  color: #888;
  font-size: 14.2px;
}
.add {
  width: 82px;
  height: 30px;
}
.str-foot {
  display: flex;
  justify-content: space-between;
  margin: 3px 12px 0 -1px;
}

/* color coding */
.g-color {
  height: 111px;
  margin-top: 18px;
  padding: 9px 12px 0 10px;
}
.g-color .legend {
  top: -14px;
}
.c-row {
  display: flex;
  align-items: center;
  justify-content: space-between;
  height: 29px;
  padding-top: 1px;
  box-sizing: border-box;
}
.c-row.r2 {
  margin-top: 4px;
}
.c-row.r3 {
  margin-top: 3px;
  height: 30px;
}
.swatches {
  display: flex;
  gap: 8.3px;
}
.swatch {
  display: block;
  width: 28px;
  height: 29px;
  padding: 0;
  box-sizing: border-box;
  border: 1px solid #a9a9a9;
}
.plus-btn {
  background: #dcdcdc;
  color: #222;
  font-family: inherit;
  font-size: 22px;
  line-height: 24px;
}
.green {
  display: block;
  width: 137px;
  height: 29px;
  box-sizing: border-box;
  background: #4dff4d;
  border: 1px solid #a9a9a9;
}
.total {
  display: flex;
  align-items: center;
  height: 30px;
  margin: 29px -1px 0 0;
  padding-left: 4px;
  gap: 8px;
}
.total b {
  color: #111;
  width: 173px;
  font-size: 14.6px;
  white-space: nowrap;
}
.total-val {
  color: #333;
}
.off {
  width: 113px;
  background: #f4f4f2;
  color: #bbb;
}

/* bottom */
.cmdline {
  position: absolute;
  left: 421px;
  top: 985px;
  width: 1056px;
  height: 9px;
  background: rgba(255, 255, 255, 0.75);
  border: 1px solid #e6e6e6;
  box-sizing: border-box;
  overflow: hidden;
}
.cmd-grip {
  display: block;
  width: 70px;
  height: 10px;
  background: #d8d8d8;
}
.page-foot {
  position: absolute;
  left: 0;
  right: 0;
  bottom: 0;
  height: 2px;
  background: #e4e4e4;
}
</style>
